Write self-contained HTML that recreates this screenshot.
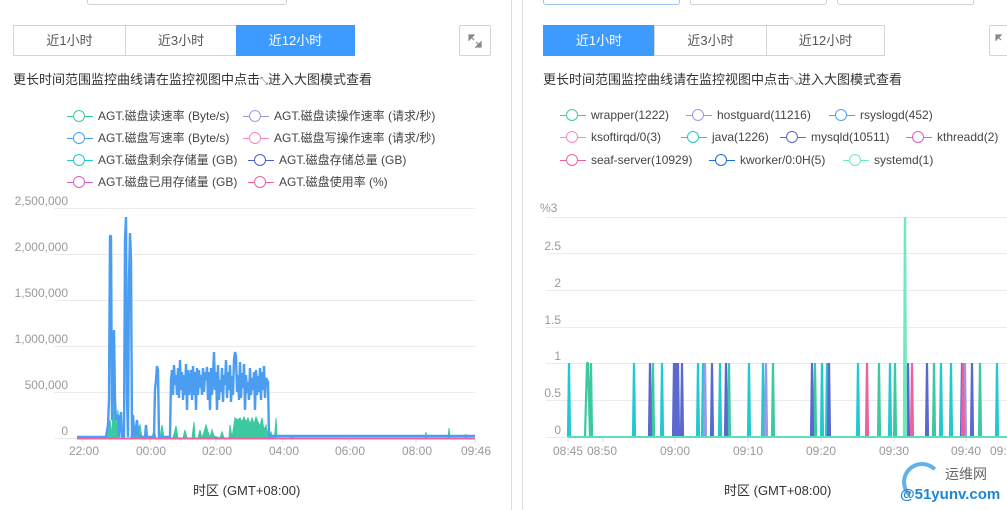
<!DOCTYPE html>
<html><head><meta charset="utf-8"><style>
*{margin:0;padding:0;box-sizing:border-box}
body{width:1007px;height:510px;background:#fff;position:relative;overflow:hidden;font-family:"Liberation Sans","Noto Sans CJK SC",sans-serif;color:#333}
.a{position:absolute}
.box{position:absolute;border:1px solid #d0d0d0;border-top:none;border-radius:0 0 3px 3px;height:5px;top:0}
.tab{position:absolute;top:25px;height:31px;border:1px solid #d4d4d4;font-size:13px;line-height:29px;text-align:center;color:#555;background:#fff}
.tab.on{background:#3d9bff;border-color:#3d9bff;color:#fff}
.hint{position:absolute;font-size:13px;color:#333;top:69px;white-space:nowrap}
.lg{position:absolute;font-size:12px;color:#444;white-space:nowrap;height:14px;line-height:14px}
.lg i{display:inline-block;position:relative;width:26px;height:14px;vertical-align:top;margin-right:5px}
.lg i:before{content:"";position:absolute;left:0;right:0;top:7px;height:1px;background:var(--c)}
.lg i:after{content:"";position:absolute;left:6px;top:1px;width:12px;height:12px;border:1.5px solid var(--c);border-radius:50%;background:#fff;box-sizing:border-box}
.yl{position:absolute;font-size:12px;color:#999;text-align:right}
.xl{position:absolute;font-size:12px;color:#999;top:444px}
</style></head><body>
<div class="box" style="left:87px;width:200px"></div>
<div class="box" style="left:543px;width:137px;border-color:#9cc5f5"></div>
<div class="box" style="left:690px;width:137px"></div>
<div class="box" style="left:837px;width:137px"></div>
<div class="a" style="left:511px;top:0;width:1px;height:510px;background:#ddd"></div>
<div class="a" style="left:522px;top:0;width:1px;height:510px;background:#ddd"></div>

<div class="tab" style="left:13px;width:113px">近1小时</div>
<div class="tab" style="left:125px;width:112px">近3小时</div>
<div class="tab on" style="left:236px;width:119px">近12小时</div>
<div class="tab" style="left:459px;width:32px;border-radius:2px"><svg width="16" height="16" viewBox="0 0 16 16" style="margin-top:7px"><path d="M2 2h5L2 7z M3 3l4 4 M14 14H9l5-5z M13 13L9 9" stroke="#888" fill="#888" stroke-width="1.2"/></svg></div>
<div class="tab on" style="left:543px;width:112px">近1小时</div>
<div class="tab" style="left:654px;width:113px">近3小时</div>
<div class="tab" style="left:766px;width:119px">近12小时</div>
<div class="tab" style="left:989px;width:30px;border-radius:2px;text-align:left"><svg width="16" height="16" viewBox="0 0 16 16" style="margin:7px 0 0 4px"><path d="M2 2h5L2 7z M3 3l4 4" stroke="#888" fill="#888" stroke-width="1.2"/></svg></div>

<div class="hint" style="left:13px">更长时间范围监控曲线请在监控视图中点击<span style="font-size:10px;color:#777">⤡</span>进入大图模式查看</div>
<div class="hint" style="left:543px">更长时间范围监控曲线请在监控视图中点击<span style="font-size:10px;color:#777">⤡</span>进入大图模式查看</div>

<div class="lg" style="left:67px;top:109px"><i style="--c:#3cc9a0"></i>AGT.磁盘读速率 (Byte/s)</div>
<div class="lg" style="left:243px;top:109px"><i style="--c:#9a9ae8"></i>AGT.磁盘读操作速率 (请求/秒)</div>
<div class="lg" style="left:67px;top:131px"><i style="--c:#4da0f5"></i>AGT.磁盘写速率 (Byte/s)</div>
<div class="lg" style="left:243px;top:131px"><i style="--c:#f58cc0"></i>AGT.磁盘写操作速率 (请求/秒)</div>
<div class="lg" style="left:67px;top:153px"><i style="--c:#22c9d0"></i>AGT.磁盘剩余存储量 (GB)</div>
<div class="lg" style="left:248px;top:153px"><i style="--c:#4a5cc8"></i>AGT.磁盘存储总量 (GB)</div>
<div class="lg" style="left:67px;top:175px"><i style="--c:#d860c8"></i>AGT.磁盘已用存储量 (GB)</div>
<div class="lg" style="left:248px;top:175px"><i style="--c:#f060a0"></i>AGT.磁盘使用率 (%)</div>

<div class="lg" style="left:560px;top:108px"><i style="--c:#3cc9a0"></i>wrapper(1222)</div>
<div class="lg" style="left:686px;top:108px"><i style="--c:#9a9ae8"></i>hostguard(11216)</div>
<div class="lg" style="left:829px;top:108px"><i style="--c:#4da0f5"></i>rsyslogd(452)</div>
<div class="lg" style="left:560px;top:130px"><i style="--c:#f58cc0"></i>ksoftirqd/0(3)</div>
<div class="lg" style="left:681px;top:130px"><i style="--c:#22c9d0"></i>java(1226)</div>
<div class="lg" style="left:780px;top:130px"><i style="--c:#5a68d0"></i>mysqld(10511)</div>
<div class="lg" style="left:906px;top:130px"><i style="--c:#d860c8"></i>kthreadd(2)</div>
<div class="lg" style="left:560px;top:153px"><i style="--c:#f060a0"></i>seaf-server(10929)</div>
<div class="lg" style="left:709px;top:153px"><i style="--c:#1a6fd0"></i>kworker/0:0H(5)</div>
<div class="lg" style="left:843px;top:153px"><i style="--c:#70e8c0"></i>systemd(1)</div>

<!-- left chart -->
<div class="yl" style="left:0;width:68px;top:194px">2,500,000</div>
<div class="yl" style="left:0;width:68px;top:240px">2,000,000</div>
<div class="yl" style="left:0;width:68px;top:286px">1,500,000</div>
<div class="yl" style="left:0;width:68px;top:332px">1,000,000</div>
<div class="yl" style="left:0;width:68px;top:378px">500,000</div>
<div class="yl" style="left:0;width:68px;top:424px">0</div>
<div class="xl" style="left:69px">22:00</div>
<div class="xl" style="left:136px">00:00</div>
<div class="xl" style="left:202px">02:00</div>
<div class="xl" style="left:269px">04:00</div>
<div class="xl" style="left:335px">06:00</div>
<div class="xl" style="left:402px">08:00</div>
<div class="xl" style="left:461px">09:46</div>
<div class="a" style="left:193px;top:480px;font-size:13px;color:#333">时区 (GMT+08:00)</div>
<svg class="a" style="left:0;top:0" width="511" height="510">
<g stroke="#ebebeb" stroke-width="1"><path d="M54 208.5H475M54 254.5H475M54 300.5H475M54 346.5H475M54 392.5H475M54 438.5H475"/></g>
<g stroke="#ddd"><path d="M83 438v5M150 438v5M216 438v5M283 438v5M349 438v5M416 438v5M475 438v5"/></g>
<polyline fill="#3cc9a0" stroke="#3cc9a0" stroke-width="1" points="77,438 106,438 108,428 110,420 112,438 113,380 114,368 115,380 116,438 117,420 118,410 119,438 122,438 125,438 130,438 140,425 142,438 152,438 154,430 156,438 160,438 162,425 164,438 173,438 175,430 176,426 178,438 183,438 185,430 187,438 192,438 194,422 195,438 198,438 200,430 202,438 204,432 206,425 208,432 210,438 212,430 214,436 220,438 222,432 224,438 229,438 230,425 232,438 235,418 238,420 240,418 242,422 244,417 246,422 248,418 250,424 252,418 254,424 256,417 258,422 260,426 262,418 264,430 266,425 268,438 271,432 273,438 275,433 276,418 277,438 290,438 292,436 293,438 425,438 426,432 427,438 448,438 449,428 450,438 465,438 466,434 467,438 475,438"/>
<polyline fill="none" stroke="#4a9df0" stroke-width="2.4" stroke-linejoin="bevel" points="77,437 106,437 108,425 109,400 110,236 111,236 112,420 113,380 114,330 115,400 116,420 118,415 119,437 120,420 121,412 122,437 124,437 125,240 126,217 127,400 128,437 129,280 130,233 131,260 132,437 133,415 134,430 135,437 137,420 138,435 142,437 145,437 146,425 147,437 154,437 155,390 156,380 157,366 158,370 159,437 160,437 170,437 171,380 172,370 173,395 174,365 175,385 176,375 177,395 178,368 179,398 180,360 181,390 182,372 183,400 184,375 185,395 186,364 187,410 188,370 189,395 190,380 191,370 192,400 193,366 194,395 195,372 196,410 197,368 198,395 199,370 200,388 201,375 202,395 203,368 204,392 205,372 206,380 207,367 208,400 209,372 210,410 211,368 212,395 213,375 214,352 215,390 216,372 217,410 218,365 219,400 220,380 221,392 222,368 223,402 224,375 225,385 226,360 227,398 228,372 229,390 230,365 231,402 232,376 233,395 234,360 235,352 236,356 237,392 238,375 239,400 240,362 241,398 242,373 243,388 244,364 245,410 246,375 247,393 248,382 249,400 250,368 251,395 252,378 253,390 254,372 255,410 256,370 257,395 258,376 259,392 260,368 261,400 262,372 263,390 264,366 265,398 266,378 267,380 268,382 269,437 270,437 272,436 475,436"/>
<path d="M77 438.5H475" stroke="#f060a0" stroke-width="2"/>
</svg>

<!-- right chart -->
<div class="yl" style="left:540px;width:20px;top:201px;text-align:left">%3</div>
<div class="yl" style="left:530px;width:31px;top:239px">2.5</div>
<div class="yl" style="left:530px;width:31px;top:276px">2</div>
<div class="yl" style="left:530px;width:31px;top:313px">1.5</div>
<div class="yl" style="left:530px;width:31px;top:349px">1</div>
<div class="yl" style="left:530px;width:31px;top:386px">0.5</div>
<div class="yl" style="left:530px;width:31px;top:423px">0</div>
<div class="xl" style="left:553px">08:45</div>
<div class="xl" style="left:587px">08:50</div>
<div class="xl" style="left:660px">09:00</div>
<div class="xl" style="left:733px">09:10</div>
<div class="xl" style="left:806px">09:20</div>
<div class="xl" style="left:879px">09:30</div>
<div class="xl" style="left:951px">09:40</div>
<div class="xl" style="left:990px">09:</div>
<div class="a" style="left:724px;top:480px;font-size:13px;color:#333">时区 (GMT+08:00)</div>
<svg class="a" style="left:512px;top:0" width="495" height="510">
<g stroke="#ebebeb"><path d="M34 217.5H495M34 253.5H495M34 290.5H495M34 327.5H495M34 363.5H495M34 400.5H495M34 437.5H495"/></g>
<g stroke="#ddd"><path d="M56 437v5M91 437v5M163 437v5M236 437v5M309 437v5M382 437v5M454 437v5"/></g>
<g stroke-width="2.2" fill="none" stroke-linejoin="bevel">
<path stroke="#22c9d0" d="M56 437L57 363 58 437M121 437L122 363 123 437M149 437L150 363 151 437M185 437L186 363 187 437M190 437L191 363 192 437M207 437L208 363 209 437M236 437L237 363 238 437M250 437L251 363 252 437M309 437L310 363 311 437M314 437L315 363 316 437M345 437L346 363 347 437M377 437L378 363 379 437M428 437L429 363 430 437M438 437L439 363 440 437M484 437L485 363 486 437"/>
<path stroke="#3cc9a0" d="M73 437L75 363 76 363 78 437M78 437L79 363 80 437M140 437L141 363 142 437M216 437L217 363 218 437M260 437L261 363 262 437M302 437L303 363 304 437M366 437L367 363 368 437M382 437L383 363 384 437M421 437L422 363 423 437M467 437L468 363 469 437"/>
<path stroke="#5a68d0" d="M137 437L138 363 139 437M161 437L162 363 163 437M163 437L164 363 165 437M165 437L166 363 167 437M169 437L170 363 171 437M199 437L200 363 201 437M213 437L214 363 215 437M299 437L300 363 301 437M316 437L317 363 318 437M395 437L396 363 397 437M414 437L415 363 416 437M459 437L460 363 461 437M449 437L450 363 451 437"/>
<path stroke="#9a9ae8" d="M192 437L193 363 194 437M253 437L254 363 255 437M452 437L453 363 454 437"/>
<path stroke="#f060a0" d="M354 437L355 363 356 437M399 437L400 363 401 437M450 437L451 363 452 437"/>
<path stroke="#70e8c0" stroke-width="2.4" d="M392 437L393 217 394 437"/>
</g>
<path d="M56 437H495" stroke="#58e0c0" stroke-width="2"/>
</svg>
<div class="a" style="left:902px;top:462px;width:40px;height:40px;border:4px solid #3aa0e8;border-radius:50%;border-right-color:transparent;border-bottom-color:transparent;opacity:.8"></div>
<div class="a" style="left:945px;top:464px;font-size:14px;color:#666">运维网</div>
<div class="a" style="left:900px;top:486px;font-size:15px;color:#1d86d8;font-weight:bold">@51yunv.com</div>
</body></html>
